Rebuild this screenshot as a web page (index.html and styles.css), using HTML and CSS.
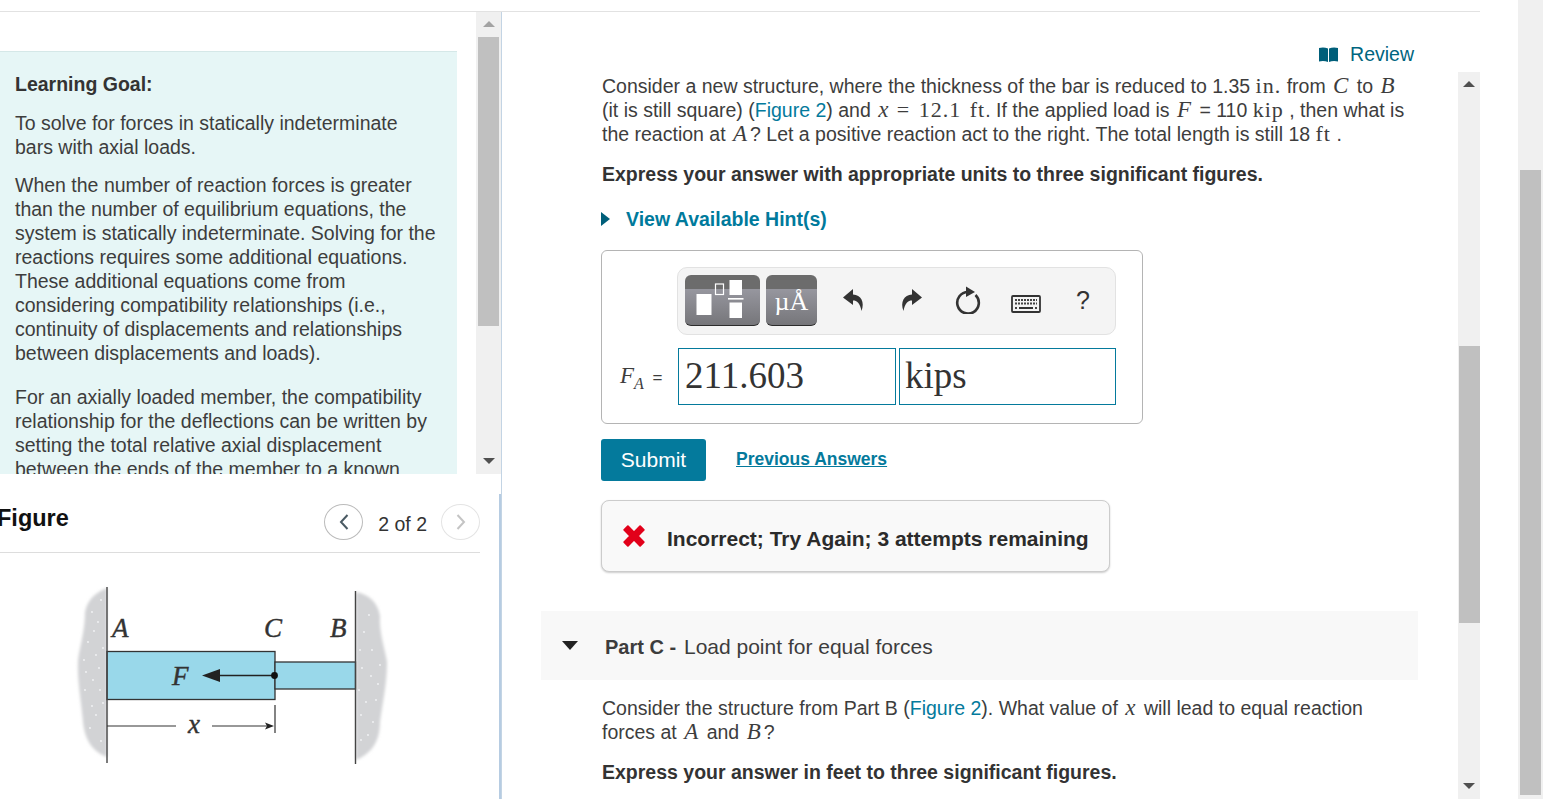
FILE: index.html
```html
<!DOCTYPE html>
<html lang="en">
<head>
    <meta charset="UTF-8">
    <meta name="viewport" content="width=device-width, initial-scale=1.0">
    <title>Part B - Statically indeterminate bars</title>
    <link rel="stylesheet" href="styles.css">
</head>
<body>
    <div class="page">
        <div class="main">
            <!-- left column -->
            <div class="left-col">
                <div class="goal-pane">
                    <div class="goal-scroll">
                        <div class="goal-box">
                            <p class="goal-title">Learning Goal:</p>
                            <p>To solve for forces in statically indeterminate bars with axial loads.</p>
                            <p>When the number of reaction forces is greater than the number of equilibrium equations, the system is statically indeterminate. Solving for the reactions requires some additional equations. These additional equations come from considering compatibility relationships (i.e., continuity of displacements and relationships between displacements and loads).</p>
                            <p class="goal-gap">For an axially loaded member, the compatibility relationship for the deflections can be written by setting the total relative axial displacement between the ends of the member to a known</p>
                        </div>
                    </div>
                    <div class="bar bar-goal">
                        <span class="arrow-up arrow-light"></span>
                        <div class="bar-track"><div class="thumb thumb-goal"></div></div>
                        <span class="arrow-down"></span>
                    </div>
                </div>

                <div class="figure-pane">
                    <div class="figure-head">
                        <h2 class="figure-title">Figure</h2>
                        <div class="figure-nav">
                            <button class="nav-btn" type="button">
                                <svg width="12" height="18" viewBox="0 0 12 18"><path d="M9.5 2 L3 9 L9.5 16" fill="none" stroke="#4a5a63" stroke-width="2"/></svg>
                            </button>
                            <span class="nav-count">2 of 2</span>
                            <button class="nav-btn nav-off" type="button">
                                <svg width="12" height="18" viewBox="0 0 12 18"><path d="M2.5 2 L9 9 L2.5 16" fill="none" stroke="#c4c4c4" stroke-width="2"/></svg>
                            </button>
                        </div>
                    </div>
                    <svg class="figure-img" width="480" height="246" viewBox="0 553 480 246">
                        <defs>
                            <filter id="soft"><feGaussianBlur stdDeviation="1.5"/></filter>
                        </defs>
                        <path d="M107 588 C97 592 88 598 85 612 C85 630 80 645 78 660 C77 680 81 700 83 722 C85 742 94 752 107 757 Z" fill="#d2d3d5" filter="url(#soft)"/>
                        <path d="M356 592 C368 594 378 602 380 616 C379 632 384 645 387 662 C387 685 382 705 380 722 C380 745 368 755 356 760 Z" fill="#d2d3d5" filter="url(#soft)"/>
                        <g fill="#f4f4f6">
                            <circle cx="88" cy="642" r="0.9"/><circle cx="96" cy="655" r="0.9"/><circle cx="86" cy="672" r="0.9"/>
                            <circle cx="100" cy="690" r="0.9"/><circle cx="92" cy="706" r="0.9"/><circle cx="98" cy="622" r="0.9"/>
                            <circle cx="90" cy="728" r="0.9"/><circle cx="101" cy="741" r="0.9"/><circle cx="94" cy="631" r="0.9"/>
                            <circle cx="103" cy="648" r="0.9"/><circle cx="84" cy="660" r="0.9"/><circle cx="99" cy="668" r="0.9"/>
                            <circle cx="93" cy="680" r="0.9"/><circle cx="85" cy="690" r="0.9"/><circle cx="103" cy="703" r="0.9"/>
                            <circle cx="96" cy="715" r="0.9"/><circle cx="92" cy="612" r="0.9"/><circle cx="101" cy="600" r="0.9"/>
                            <circle cx="364" cy="632" r="0.9"/><circle cx="372" cy="650" r="0.9"/><circle cx="362" cy="668" r="0.9"/>
                            <circle cx="378" cy="684" r="0.9"/><circle cx="366" cy="702" r="0.9"/><circle cx="373" cy="722" r="0.9"/>
                            <circle cx="361" cy="740" r="0.9"/><circle cx="369" cy="615" r="0.9"/><circle cx="380" cy="665" r="0.9"/>
                            <circle cx="360" cy="650" r="0.9"/><circle cx="371" cy="676" r="0.9"/><circle cx="359" cy="690" r="0.9"/>
                            <circle cx="376" cy="700" r="0.9"/><circle cx="361" cy="715" r="0.9"/><circle cx="368" cy="735" r="0.9"/>
                        </g>
                        <rect x="107" y="651.5" width="168" height="48" fill="#99d8ea" stroke="#333" stroke-width="1.3"/>
                        <rect x="275" y="662" width="80.5" height="27" fill="#99d8ea" stroke="#333" stroke-width="1.3"/>
                        <path d="M107 587 V763 M355.5 591 V764" stroke="#444" stroke-width="1.4" fill="none"/>
                        <path d="M274 675.5 H216" stroke="#222" stroke-width="1.3"/>
                        <path d="M202 675.5 L220 669 V682 Z" fill="#222"/>
                        <circle cx="274.5" cy="675.5" r="3.4" fill="#111"/>
                        <path d="M107 726 H176 M212 726 H270 M275 705 V733" stroke="#333" stroke-width="1.2" fill="none"/>
                        <path d="M274 726 L265 722.5 L267 726 L265 729.5 Z" fill="#222"/>
                        <text class="fig-label" x="112" y="637">A</text>
                        <text class="fig-label" x="264" y="637">C</text>
                        <text class="fig-label" x="330" y="637">B</text>
                        <text class="fig-label" x="172" y="685">F</text>
                        <text class="fig-label" x="188" y="733">x</text>
                    </svg>
                </div>
            </div>

            <!-- right column -->
            <div class="right-col">
                <div class="review-row">
                    <svg width="19" height="15" viewBox="0 0 19 15"><path d="M0 1 Q5 0 9 1.500 V15 Q5 13.500 0 14.500 Z M10 1.500 Q14 0 19 1 V14.500 Q14 13.500 10 15 Z" fill="#005f7a"/></svg>
                    <a class="review-link">Review</a>
                </div>
                <div class="work-area">
                    <div class="work-scroll">
                        <div class="part-body">
                            <p class="question">Consider a new structure, where the thickness of the bar is reduced to 1.35 <span class="m">in.</span> from <span class="mi">C</span> to <span class="mi">B</span> (it is still square) (<a class="link">Figure 2</a>) and <span class="mi">x</span> <span class="m">= 12.1 ft</span>. If the applied load is <span class="mi">F</span> = 110 <span class="m">kip</span> , then what is the reaction at <span class="mi">A</span>? Let a positive reaction act to the right. The total length is still 18 <span class="m">ft</span> .</p>
                            <p class="instruction">Express your answer with appropriate units to three significant figures.</p>
                            <div class="hint-row"><span class="hint-arrow"></span><a class="hint-link">View Available Hint(s)</a></div>

                            <div class="answer-box">
                                <div class="toolbar">
                                    <div class="tool-btn tool-templates">
                                        <svg width="58" height="42" viewBox="0 0 58 42">
                                            <rect x="2.5" y="15" width="15" height="21" fill="#fff"/>
                                            <rect x="21.500" y="5" width="8" height="10.500" fill="none" stroke="#fff" stroke-width="1.2"/>
                                            <rect x="35.500" y="1" width="12.500" height="15" fill="#fff"/>
                                            <rect x="34" y="19" width="15.500" height="1.600" fill="#fff"/>
                                            <rect x="35.500" y="23.500" width="12.500" height="15.500" fill="#fff"/>
                                        </svg>
                                    </div>
                                    <div class="tool-btn tool-units">µÅ</div>
                                    <div class="tool-icons">
                                        <svg width="24" height="26" viewBox="0 0 24 26"><path d="M11 2 L1 10.5 L11 18 V13.5 C15 13.500 18 16 19.500 24 C23 15 19 8 11 7.500 Z" fill="#333"/></svg>
                                        <svg width="24" height="26" viewBox="0 0 24 26"><path d="M13 2 L23 10.5 L13 18 V13.5 C9 13.500 6 16 4.500 24 C1 15 5 8 13 7.500 Z" fill="#333"/></svg>
                                        <svg width="26" height="28" viewBox="0 0 26 28"><path d="M13 6 A10.800 10.800 0 1 0 20.500 9" fill="none" stroke="#333" stroke-width="2.600"/><path d="M11 0.500 L20 6 L11 11 Z" fill="#333"/></svg>
                                        <svg class="kbd-icon" width="30" height="18" viewBox="0 0 30 18">
                                            <rect x="1" y="1" width="28" height="16" rx="1" fill="#f4f4f4" stroke="#333" stroke-width="1.800"/>
                                            <path d="M4 5 H26 M4 8.500 H26" stroke="#444" stroke-width="2" stroke-dasharray="2 1"/>
                                            <path d="M8 13 H22" stroke="#333" stroke-width="2"/>
                                            <path d="M4 13 H6 M24 13 H26" stroke="#444" stroke-width="2"/>
                                        </svg>
                                        <span class="help-mark">?</span>
                                    </div>
                                </div>
                                <div class="answer-row">
                                    <span class="answer-label"><span class="mi">F<sub>A</sub></span> =</span>
                                    <input class="answer-input input-value" type="text" value="211.603">
                                    <input class="answer-input input-units" type="text" value="kips">
                                </div>
                            </div>

                            <div class="submit-row">
                                <button class="submit-btn" type="button">Submit</button>
                                <a class="prev-link">Previous Answers</a>
                            </div>

                            <div class="feedback">
                                <svg width="22" height="22" viewBox="2 2 18 18"><path d="M3 6 L6 3 L11 8 L16 3 L19 6 L14 11 L19 16 L16 19 L11 14 L6 19 L3 16 L8 11 Z" fill="#e2001a" stroke="#e2001a" stroke-width="1.5" stroke-linejoin="round"/></svg>
                                <span class="feedback-text">Incorrect; Try Again; 3 attempts remaining</span>
                            </div>
                        </div>

                        <div class="part-head">
                            <span class="part-arrow"></span>
                            <span class="part-name"><b>Part C -</b> Load point for equal forces</span>
                        </div>
                        <div class="part-body part-c">
                            <p class="question">Consider the structure from Part B (<a class="link">Figure 2</a>). What value of <span class="mi">x</span> will lead to equal reaction forces at <span class="mi">A</span> and <span class="mi">B</span>?</p>
                            <p class="instruction">Express your answer in feet to three significant figures.</p>
                        </div>
                    </div>
                    <div class="bar bar-work">
                        <span class="arrow-up"></span>
                        <div class="bar-track"><div class="thumb thumb-work"></div></div>
                        <span class="arrow-down"></span>
                    </div>
                </div>
            </div>
        </div>
        <div class="page-bar"><div class="page-thumb"></div></div>
    </div>
</body>
</html>
```

FILE: styles.css
```css
* {
    box-sizing: border-box;
}
html, body {
    height: 100%;
}
body {
    margin: 0;
    font-family: "Liberation Sans", Arial, sans-serif;
    font-size: 19.5px;
    line-height: 24px;
    color: #3d3d3d;
    background: #fff;
    overflow: hidden;
}
p {
    margin: 0;
}
.page {
    display: flex;
    height: 799px;
}
.main {
    display: flex;
    width: 1480px;
    height: 788px;
    margin-top: 11px;
    margin-right: 38px;
    border-top: 1px solid #e2e2e2;
}
.page-bar {
    width: 25px;
    height: 799px;
    padding: 170px 2px 4px;
    background: #f0f0f0;
}
.page-thumb {
    height: 100%;
    background: #c0c0c0;
}

/* left column */
.left-col {
    width: 502px;
    flex-shrink: 0;
    border-right: 1px solid #c3d4e4;
}
.goal-pane {
    display: flex;
    height: 462px;
}
.goal-scroll {
    width: 476px;
    height: 462px;
    overflow: hidden;
    padding-top: 39px;
}
.goal-box {
    width: 457px;
    padding: 20px 20px 0 15px;
    background: #e6f6f6;
    border-top: 1px solid #d5e8e8;
}
.goal-box p {
    margin-bottom: 14px;
}
.goal-box .goal-title {
    font-weight: bold;
    color: #333;
    margin-bottom: 15px;
}
.goal-box .goal-gap {
    margin-top: 20px;
}
.bar {
    position: relative;
    background: #f0f0f0;
    display: flex;
    flex-direction: column;
    align-items: center;
}
.bar-goal {
    width: 25px;
    height: 462px;
}
.bar-work {
    width: 22px;
    height: 727px;
}
.bar-track {
    flex: 1;
    width: 100%;
}
.thumb {
    background: #c0c0c0;
}
.thumb-goal {
    width: 21px;
    height: 289px;
    margin: 5px 0 0 2px;
}
.thumb-work {
    width: 21px;
    height: 277px;
    margin: 254px 0 0 1px;
}
.arrow-up, .arrow-down {
    width: 0;
    height: 0;
    flex-shrink: 0;
    border-left: 6px solid transparent;
    border-right: 6px solid transparent;
}
.arrow-up {
    margin-top: 9px;
    margin-bottom: 5px;
    border-bottom: 6px solid #505050;
}
.arrow-down {
    margin-top: 5px;
    margin-bottom: 10px;
    border-top: 6px solid #505050;
}
.arrow-light {
    border-bottom-color: #a3a3a3;
}
.figure-pane {
    width: 501px;
    margin-top: 20px;
    border-right: 2px solid #b6cce2;
    height: 306px;
    margin-right: -1px;
    position: relative;
}
.figure-head {
    display: flex;
    justify-content: space-between;
    width: 480px;
    height: 59px;
    padding-top: 10px;
    border-bottom: 1px solid #ddd;
}
.figure-title {
    margin: 0 0 0 -3px;
    font-size: 23.5px;
    line-height: 28px;
    font-weight: bold;
    color: #111;
}
.figure-nav {
    display: flex;
    align-items: flex-start;
    gap: 14px;
}
.nav-btn {
    width: 39px;
    height: 36px;
    padding: 0;
    border: 1px solid #bbb;
    border-radius: 50%;
    background: #fff;
    display: flex;
    align-items: center;
    justify-content: center;
}
.nav-off {
    border-color: #e4e4e4;
}
.nav-count {
    margin-left: 1px;
    padding-top: 8px;
    color: #333;
}
.figure-img {
    display: block;
}
.fig-label {
    font-family: "Liberation Serif", serif;
    font-style: italic;
    font-size: 27px;
    fill: #333;
    stroke: #333;
    stroke-width: 0.4px;
}

/* right column */
.right-col {
    width: 978px;
    position: relative;
}
.review-row {
    display: flex;
    align-items: center;
    justify-content: flex-end;
    gap: 12px;
    height: 60px;
    padding: 24px 66px 0 0;
}
.review-link {
    color: #00657f;
}
.work-area {
    display: flex;
    height: 727px;
}
.work-scroll {
    width: 956px;
    height: 727px;
    overflow: hidden;
    padding: 2px 40px 0 39px;
}
.part-body {
    padding-left: 60px;
}
.mi {
    font-family: "Liberation Serif", serif;
    font-style: italic;
    font-size: 23px;
    letter-spacing: 1px;
    margin: 0 2px;
}
.m {
    font-family: "Liberation Serif", serif;
    font-size: 22px;
    letter-spacing: 1px;
    word-spacing: 2px;
}
.link {
    color: #047a9c;
}
.question {
    max-width: 807px;
    margin-bottom: 16px;
    padding-left: 1px;
}
.instruction {
    font-weight: bold;
    color: #333;
    padding-left: 1px;
}
.hint-row {
    display: flex;
    align-items: center;
    margin-top: 21px;
    height: 24px;
}
.hint-arrow {
    width: 0;
    height: 0;
    border-top: 7px solid transparent;
    border-bottom: 7px solid transparent;
    border-left: 9px solid #005f7a;
    margin-right: 16px;
}
.hint-link {
    font-weight: bold;
    color: #007a9c;
}
.answer-box {
    width: 542px;
    height: 174px;
    margin-top: 19px;
    padding: 16px 26px 0 0;
    border: 1px solid #b4b4b4;
    border-radius: 6px;
}
.toolbar {
    display: flex;
    align-items: center;
    width: 439px;
    height: 68px;
    margin-left: 75px;
    padding: 0 0 2px 7px;
    background: #f4f4f4;
    border: 1px solid #e2e2e2;
    border-radius: 10px;
}
.tool-btn {
    height: 51px;
    border-radius: 6px;
    border-bottom: 1px solid #2c2c2c;
    background: linear-gradient(#6c6c6c 0, #6c6c6c 28%, #96969e 29%, #76767a 100%);
    display: flex;
    align-items: center;
    justify-content: center;
}
.tool-templates {
    width: 75px;
    margin-right: 6px;
}
.tool-units {
    width: 51px;
    color: #fff;
    font-family: "Liberation Serif", serif;
    font-size: 26px;
    padding-top: 5px;
}
.tool-icons {
    display: flex;
    align-items: center;
    justify-content: space-between;
    width: 248px;
    margin-left: 25px;
}
.kbd-icon {
    margin: 8px 3px 0 -3px;
}
.help-mark {
    font-size: 25px;
    color: #333;
}
.answer-row {
    display: flex;
    align-items: center;
    margin-top: 13px;
}
.answer-label {
    width: 76px;
    padding-left: 18px;
    font-size: 17px;
    white-space: nowrap;
}
.answer-label .mi {
    letter-spacing: 0;
    margin: 0 4px 0 0;
}
.answer-label sub {
    font-size: 16px;
    line-height: 0;
}
.answer-input {
    height: 57px;
    padding: 0 6px 2px;
    border: 1px solid #047a9c;
    border-radius: 0;
    font-family: "Liberation Serif", serif;
    font-size: 37px;
    color: #333;
    outline: none;
}
.input-value {
    width: 218px;
    margin-right: 3px;
}
.input-units {
    width: 217px;
    padding-left: 5px;
}
.submit-row {
    display: flex;
    align-items: center;
    gap: 30px;
    margin-top: 15px;
}
.submit-btn {
    width: 105px;
    height: 42px;
    border: none;
    border-radius: 3px;
    background: #047a9c;
    color: #fff;
    font-family: "Liberation Sans", Arial, sans-serif;
    font-size: 21px;
}
.prev-link {
    font-size: 17.5px;
    font-weight: bold;
    color: #047a9c;
    text-decoration: underline;
    margin-bottom: 2px;
}
.feedback {
    display: flex;
    align-items: center;
    gap: 22px;
    width: 509px;
    height: 72px;
    margin-top: 19px;
    padding-left: 21px;
    background: #f9f9f9;
    border: 1px solid #ccc;
    border-radius: 8px;
    box-shadow: 0 1px 2px rgba(0,0,0,0.2);
}
.feedback-text {
    padding-top: 5px;
    font-size: 21px;
    font-weight: bold;
    color: #2b2b2b;
    white-space: nowrap;
}
.part-head {
    display: flex;
    align-items: center;
    width: 877px;
    height: 69px;
    margin-top: 39px;
    padding-left: 21px;
    background: #f8f8f8;
}
.part-arrow {
    width: 0;
    height: 0;
    border-left: 8px solid transparent;
    border-right: 8px solid transparent;
    border-top: 9px solid #222;
    margin-right: 27px;
}
.part-name {
    font-size: 21px;
    padding-top: 2px;
}
.part-name b {
    font-size: 20px;
    margin-right: 2px;
}
.part-c {
    padding-top: 16px;
}
```
